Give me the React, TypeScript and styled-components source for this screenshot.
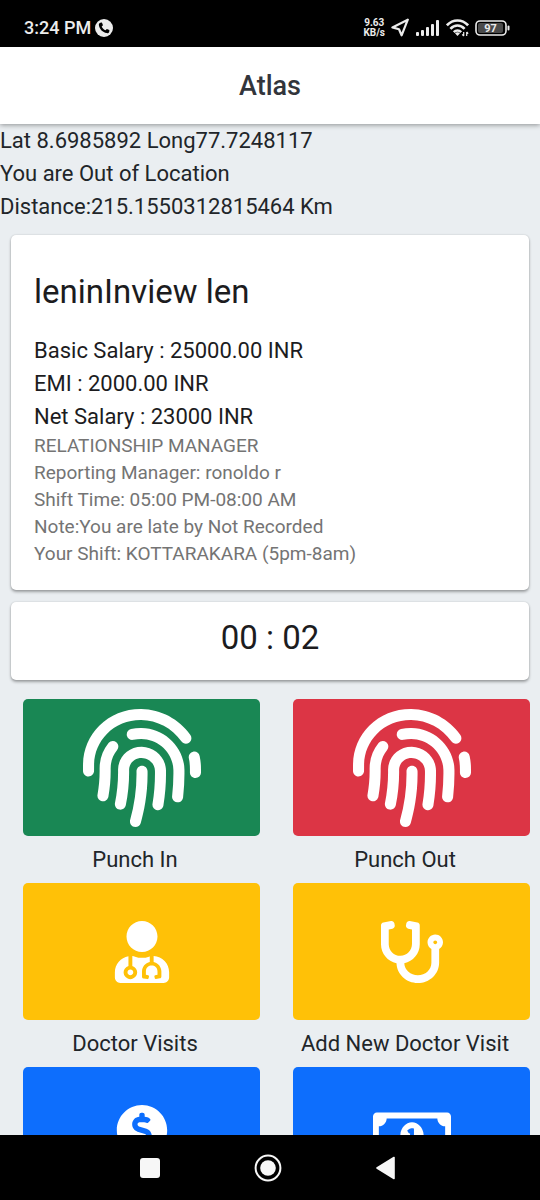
import React from "react";
import styled, { createGlobalStyle } from "styled-components";
import type { IconType } from "react-icons";
import {
  FaFingerprint,
  FaUserMd,
  FaStethoscope,
  FaDonate,
  FaRegMoneyBillAlt,
} from "react-icons/fa";

const GlobalStyle = createGlobalStyle`
  *, *::before, *::after { box-sizing: border-box; }
  body {
    margin: 0;
    background: #eaeef1;
    font-family: Roboto, "Liberation Sans", sans-serif;
    color: #212529;
  }
`;

const Screen = styled.div`
  display: flex;
  flex-direction: column;
  height: 100vh;
  overflow: hidden;
`;

const StatusBar = styled.div`
  flex: none;
  display: flex;
  align-items: center;
  justify-content: space-between;
  height: 47px;
  padding: 8px 30px 0 24px;
  background: #000;
  color: #ececec;
`;

const StatusGroup = styled.div<{ $gap: number }>`
  display: flex;
  align-items: center;
  gap: ${(p) => p.$gap}px;
`;

const Clock = styled.span`
  font-size: 18px;
  line-height: 24px;
  font-weight: 500;
`;

const Speed = styled.span`
  font-size: 10px;
  line-height: 10px;
  font-weight: 700;
  text-align: center;
`;

const Header = styled.header`
  flex: none;
  position: relative;
  display: flex;
  align-items: center;
  justify-content: center;
  height: 77px;
  background: #fff;
  box-shadow: 0 1px 5px rgba(0, 0, 0, 0.4);
`;

const Title = styled.h1`
  margin: 0;
  font-size: 27px;
  line-height: 32px;
  font-weight: 500;
  color: #32353b;
`;

const Content = styled.main`
  flex: 1;
  min-height: 0;
  overflow: hidden;
`;

const Line = styled.p`
  margin: 0;
  font-size: 22px;
  line-height: 33px;
`;

const Card = styled.section<{ $pad: string }>`
  margin: 12px 11px 0;
  padding: ${(p) => p.$pad};
  background: #fff;
  border-radius: 5px;
  box-shadow: 0 2px 3px rgba(0, 0, 0, 0.32), 0 0 2px rgba(0, 0, 0, 0.16);
  color: #1c1c1e;
`;

const Name = styled.h2`
  margin: 0 0 22px;
  font-size: 33px;
  line-height: 40px;
  font-weight: 400;
`;

const Details = styled.div`
  margin-top: -1px;
`;

const Detail = styled.p`
  margin: 0;
  font-size: 19px;
  line-height: 27px;
  color: #747474;
`;

const Timer = styled.div`
  font-size: 33px;
  line-height: 40px;
  text-align: center;
`;

const Tiles = styled.div`
  display: grid;
  grid-template-columns: 1fr 1fr;
  row-gap: 7px;
  padding-top: 19px;
`;

const Tile = styled.div`
  display: flex;
  flex-direction: column;
  gap: 7px;
`;

const TileButton = styled.button<{ $color: string }>`
  display: flex;
  align-items: center;
  justify-content: center;
  height: 137px;
  margin: 0 10px 0 23px;
  padding: 0;
  border: 0;
  border-radius: 5px;
  background: ${(p) => p.$color};
  color: #fff;
  cursor: pointer;
`;

const TileLabel = styled.label`
  font-size: 22px;
  line-height: 33px;
  text-align: center;
  white-space: nowrap;
`;

const NavBar = styled.nav`
  flex: none;
  display: flex;
  align-items: center;
  justify-content: center;
  gap: 94px;
  height: 65px;
  padding-right: 4px;
  background: #000;
`;

const NavButton = styled.button`
  display: flex;
  padding: 0;
  border: 0;
  background: none;
  cursor: pointer;
`;

const details = [
  "RELATIONSHIP MANAGER",
  "Reporting Manager: ronoldo r",
  "Shift Time: 05:00 PM-08:00 AM",
  "Note:You are late by Not Recorded",
  "Your Shift: KOTTARAKARA (5pm-8am)",
];

type Action = { id: string; label?: string; color: string; icon: IconType; size: number };

const actions: Action[] = [
  { id: "punch-in", label: "Punch In", color: "#198754", icon: FaFingerprint, size: 118 },
  { id: "punch-out", label: "Punch Out", color: "#dc3545", icon: FaFingerprint, size: 118 },
  { id: "visits", label: "Doctor Visits", color: "#ffc107", icon: FaUserMd, size: 62 },
  { id: "add-visit", label: "Add New Doctor Visit", color: "#ffc107", icon: FaStethoscope, size: 62 },
  { id: "salary", color: "#0d6efd", icon: FaDonate, size: 62 },
  { id: "expenses", color: "#0d6efd", icon: FaRegMoneyBillAlt, size: 78 },
];

const CallIcon = () => (
  <svg width="18" height="18" viewBox="0 0 18 18" aria-hidden="true">
    <circle cx="9" cy="9" r="9" fill="#ececec" />
    <path
      d="M5.2 3.7 6.9 3.5 8 6.2 6.7 7.4C7.4 9.1 8.8 10.5 10.6 11.3L11.8 10 14.4 11.1 14.2 12.9C13.8 14 12.8 14.3 11.7 14.1 7.6 13.2 4.6 10.3 3.9 6.2 3.7 5.1 4.1 4.2 5.2 3.7Z"
      fill="#000"
    />
  </svg>
);

const LocationIcon = () => (
  <svg width="19" height="19" viewBox="0 0 19 19" aria-hidden="true">
    <path
      d="M16.8 1.7 1.4 9.4 8 11.2 10.6 17.3Z"
      fill="none"
      stroke="#ececec"
      strokeWidth="2.2"
      strokeLinejoin="round"
    />
  </svg>
);

const SignalIcon = () => (
  <svg width="24" height="16" viewBox="0 0 24 16" aria-hidden="true" fill="#ececec">
    <rect x="0" y="12" width="3" height="4" rx="1" />
    <rect x="5" y="10" width="3" height="6" rx="1" />
    <rect x="10" y="7" width="3" height="9" rx="1" />
    <rect x="15" y="4" width="3" height="12" rx="1" />
    <rect x="20" y="0" width="3" height="16" rx="1" />
  </svg>
);

const WifiIcon = () => (
  <svg width="23" height="18" viewBox="0 0 23 18" aria-hidden="true">
    <g fill="none" stroke="#ececec" strokeWidth="2.6">
      <path d="M.9 6.3C7-.2 16-.2 22.1 6.3" />
      <path d="M4.4 9.8C8.6 5.4 14.4 5.4 18.6 9.8" />
      <path d="M7.8 13.1C10 10.9 13 10.9 15.2 13.1" />
    </g>
    <path d="M9 14.2Q11.5 12.2 14 14.2L11.5 17Z" fill="#ececec" />
    <path d="M17.7 13v4M16.2 15.4l1.5 1.6M20.7 17v-4M22.2 14.6 20.7 13" stroke="#ececec" strokeWidth="1.2" fill="none" />
  </svg>
);

const BatteryIcon = () => (
  <svg width="35" height="16" viewBox="0 0 35 16" role="img" aria-label="Battery 97">
    <rect x="1" y="1" width="30" height="14" rx="4" fill="none" stroke="#ececec" strokeWidth="1.6" />
    <rect x="3" y="3" width="25" height="10" rx="2" fill="#4a4a4a" />
    <rect x="32.5" y="5.5" width="2" height="5" rx="1" fill="#ececec" />
    <text x="15.5" y="12" textAnchor="middle" fontSize="11" fontWeight="700" fill="#ececec">
      97
    </text>
  </svg>
);

export default function App() {
  return (
    <Screen>
      <GlobalStyle />
      <StatusBar>
        <StatusGroup $gap={4}>
          <Clock>3:24 PM</Clock>
          <CallIcon />
        </StatusGroup>
        <StatusGroup $gap={6}>
          <Speed>
            9.63
            <br />
            KB/s
          </Speed>
          <LocationIcon />
          <SignalIcon />
          <WifiIcon />
          <BatteryIcon />
        </StatusGroup>
      </StatusBar>
      <Header>
        <Title>Atlas</Title>
      </Header>
      <Content>
        <Line>Lat 8.6985892 Long77.7248117</Line>
        <Line>You are Out of Location</Line>
        <Line>Distance:215.1550312815464 Km</Line>
        <Card $pad="37px 23px 23px">
          <Name>leninInview len</Name>
          <Line>Basic Salary : 25000.00 INR</Line>
          <Line>EMI : 2000.00 INR</Line>
          <Line>Net Salary : 23000 INR</Line>
          <Details>
            {details.map((text) => (
              <Detail key={text}>{text}</Detail>
            ))}
          </Details>
        </Card>
        <Card $pad="16px 23px 22px">
          <Timer>00 : 02</Timer>
        </Card>
        <Tiles>
          {actions.map(({ id, label, color, icon: Icon, size }) => (
            <Tile key={id}>
              <TileButton id={id} type="button" $color={color} aria-label={label ? undefined : id}>
                <Icon size={size} aria-hidden="true" />
              </TileButton>
              {label && <TileLabel htmlFor={id}>{label}</TileLabel>}
            </Tile>
          ))}
        </Tiles>
      </Content>
      <NavBar>
        <NavButton type="button" aria-label="Recent apps">
          <svg width="20" height="20" viewBox="0 0 20 20">
            <rect width="20" height="20" rx="3" fill="#f7f7f7" />
          </svg>
        </NavButton>
        <NavButton type="button" aria-label="Home">
          <svg width="28" height="28" viewBox="0 0 28 28">
            <circle cx="14" cy="14" r="12.4" fill="none" stroke="#f7f7f7" strokeWidth="2" />
            <circle cx="14" cy="14" r="7.8" fill="#f7f7f7" />
          </svg>
        </NavButton>
        <NavButton type="button" aria-label="Back">
          <svg width="20" height="24" viewBox="0 0 20 24">
            <path d="M1 12 18 1.5V22.5Z" fill="#f7f7f7" stroke="#f7f7f7" strokeWidth="1.6" strokeLinejoin="round" />
          </svg>
        </NavButton>
      </NavBar>
    </Screen>
  );
}
